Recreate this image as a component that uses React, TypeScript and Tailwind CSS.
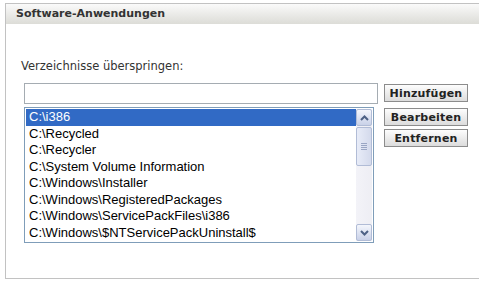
import React from "react";

const dirs = [
  "C:\\i386",
  "C:\\Recycled",
  "C:\\Recycler",
  "C:\\System Volume Information",
  "C:\\Windows\\Installer",
  "C:\\Windows\\RegisteredPackages",
  "C:\\Windows\\ServicePackFiles\\i386",
  "C:\\Windows\\$NTServicePackUninstall$",
];

function PushButton({ label, className = "" }: { label: string; className?: string }) {
  return (
    <button
      className={
        "block w-[84px] h-[18px] border border-[#8c8c8c] bg-gradient-to-b from-[#fdfdfd] to-[#dcdcdc] text-[11px] leading-[15px] font-bold text-[#222] font-['DejaVu_Sans',Verdana,sans-serif] tracking-[0.2px] " +
        className
      }
    >
      {label}
    </button>
  );
}

function Chevron({ up }: { up?: boolean }) {
  return (
    <svg width="9" height="6" viewBox="0 0 9 6">
      <path
        d={up ? "M1 5 L4.5 1.5 L8 5" : "M1 1 L4.5 4.5 L8 1"}
        fill="none"
        stroke="#4d6185"
        strokeWidth="2"
      />
    </svg>
  );
}

function ScrollBar() {
  return (
    <div className="w-[16px] h-full flex flex-col bg-gradient-to-r from-[#f3f3f8] to-[#eeeef4]">
      <div className="h-[17px] border border-[#b1bcd6] rounded-[2px] bg-gradient-to-b from-[#f4f6fc] to-[#c9d1e8] flex items-center justify-center">
        <Chevron up />
      </div>
      <div className="h-[39px] mt-[1px] border border-[#b1bcd6] rounded-[2px] bg-gradient-to-r from-[#e8ecf8] to-[#d4daec] flex items-center justify-center">
        <div className="flex flex-col gap-[1px]">
          <div className="w-[6px] h-[1px] bg-[#9aa6c4]" />
          <div className="w-[6px] h-[1px] bg-[#9aa6c4]" />
          <div className="w-[6px] h-[1px] bg-[#9aa6c4]" />
          <div className="w-[6px] h-[1px] bg-[#9aa6c4]" />
        </div>
      </div>
      <div className="flex-1" />
      <div className="h-[17px] border border-[#b1bcd6] rounded-[2px] bg-gradient-to-b from-[#f4f6fc] to-[#c9d1e8] flex items-center justify-center">
        <Chevron />
      </div>
    </div>
  );
}

export default function App() {
  return (
    <div className="w-[479px] h-[288px] bg-white pt-[3px] pl-[5px] overflow-hidden">
      <div className="h-[276px] border-l border-t border-b border-[#c2c2c2]">
        <div className="h-[20px] bg-gradient-to-b from-[#fafafa] to-[#dcdcd7] pl-[10px] text-[11px] leading-[20px] font-bold text-[#333] font-['DejaVu_Sans',Verdana,sans-serif]">
          Software-Anwendungen
        </div>
        <div className="pl-[18px] pt-[35px]">
          <div className="-ml-[3px] text-[11.5px] leading-[14px] text-[#333] font-['DejaVu_Sans',Verdana,sans-serif]">
            Verzeichnisse überspringen:
          </div>
          <div className="flex items-start mt-[10px]">
            <input
              className="w-[354px] h-[21px] border border-[#a5acb2] outline-none"
              defaultValue=""
            />
            <PushButton label="Hinzufügen" className="ml-[6px] mt-[1px]" />
          </div>
          <div className="flex items-start mt-[3px]">
            <div className="w-[350px] h-[136px] border border-[#7f9db9] p-[1px] flex">
              <div className="flex-1 font-['Liberation_Sans',Arial,sans-serif] text-[13px] text-black">
                {dirs.map((d, i) => (
                  <div
                    key={d}
                    className={
                      i === 0
                        ? "h-[16.5px] leading-[16.5px] pl-[3px] bg-[#316ac5] text-white whitespace-nowrap"
                        : "h-[16.5px] leading-[16.5px] pl-[3px] whitespace-nowrap"
                    }
                  >
                    {d}
                  </div>
                ))}
              </div>
              <ScrollBar />
            </div>
            <div className="ml-[10px] mt-[1px] flex flex-col gap-[3px]">
              <PushButton label="Bearbeiten" />
              <PushButton label="Entfernen" />
            </div>
          </div>
        </div>
      </div>
    </div>
  );
}
